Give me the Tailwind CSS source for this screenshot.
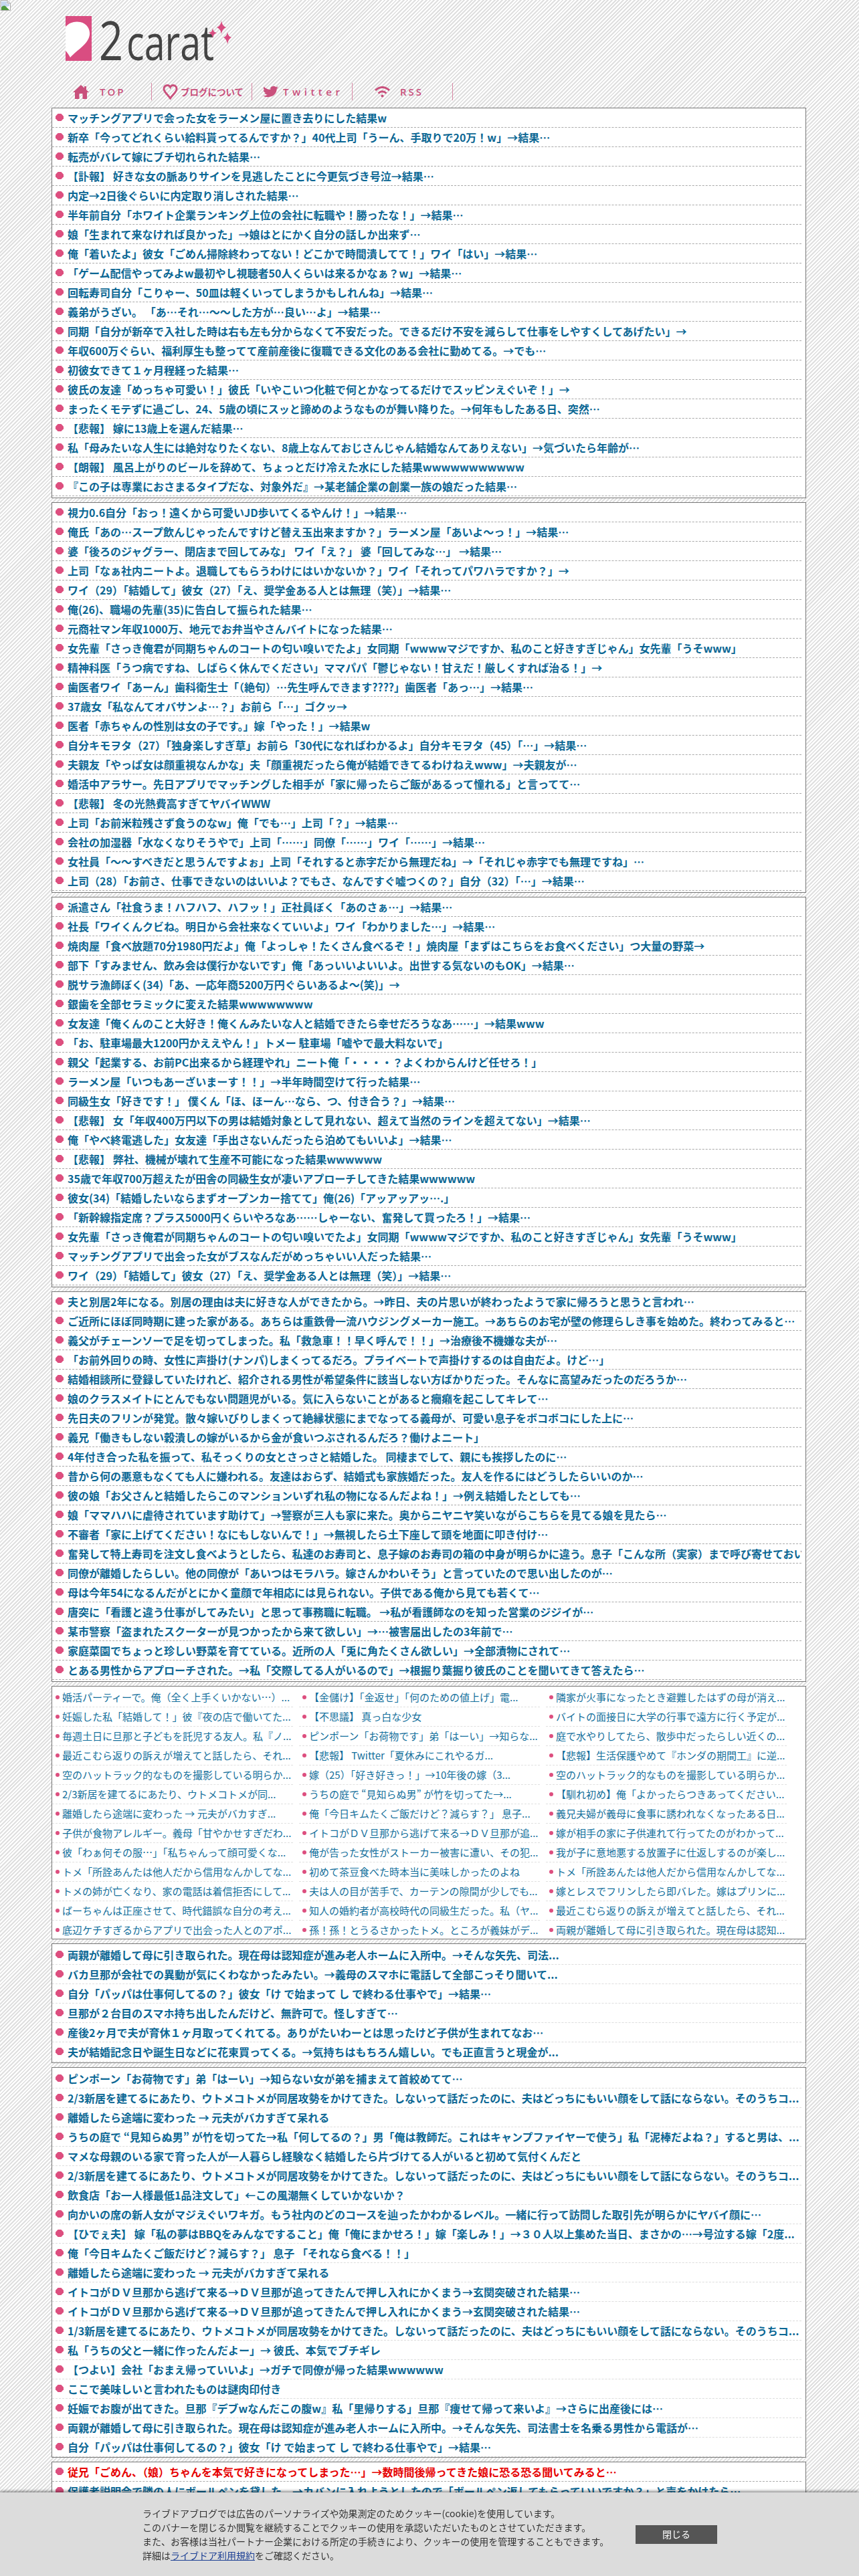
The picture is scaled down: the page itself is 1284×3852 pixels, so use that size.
<!DOCTYPE html>
<html lang="ja">
<head>
<meta charset="utf-8">
<title>2carat</title>
<script src="https://cdn.jsdelivr.net/npm/@tailwindcss/browser@4"></script>
</head>
<body class="font-['Noto_Sans_CJK_JP',sans-serif]">
<div class="h-[3852px] overflow-hidden bg-[repeating-linear-gradient(135deg,#fff_0,#fff_2px,#e0e0e0_2px,#e0e0e0_4px)]">

    <!-- broken image -->
    <svg class="block h-4 w-4" viewBox="0 0 16 16">
        <path d="M1 0.5H11L15.5 5V15.5H1Z" fill="#fff" stroke="#a9a9a9"/>
        <path d="M11 0.5V5H15.5" fill="#e4e4e4" stroke="#a9a9a9"/>
        <path d="M2 2H10V6H14V9L2 12Z" fill="#c5d7ee"/>
        <path d="M2 15V11C5 8 7 8 9 10L14 15Z" fill="#4f9a3d"/>
    </svg>

    <!-- logo -->
    <div class="pl-[98px] pt-2">
        <svg class="block h-[76px] w-[260px]" viewBox="0 0 260 76">
            <rect x="0" y="0" width="39" height="67" fill="#d94d81"/>
            <path d="M0 16C5 10 14 7 22 9C32 11 37 20 36 28C34 42 18 50 7 62C5 58 3 55 0 52Z" fill="#fff"/>
            <text x="50" y="66" font-size="80" textLength="36" lengthAdjust="spacingAndGlyphs" class="fill-[#444] font-['Open_Sans']">2</text>
            <text x="91" y="66" font-size="74" textLength="131" lengthAdjust="spacingAndGlyphs" class="fill-[#444] font-['Open_Sans']">carat</text>
            <path id="spark" d="M233 7C234 13 236 15 240 17C236 19 234 21 233 27C232 21 230 19 226 17C230 15 232 13 233 7Z" fill="#d94d81"/>
            <path d="M220 18C221 23 222 24 226 25C222 27 221 28 220 33C219 28 218 27 214 25C218 24 219 23 220 18Z" fill="#d94d81"/>
            <path d="M242 24C243 29 245 31 248 32C245 34 243 36 242 42C241 36 239 34 236 32C239 31 241 29 242 24Z" fill="#d94d81"/>
        </svg>
    </div>

    <!-- nav -->
    <nav class="ml-[77px] mt-[24px] flex h-[26px] text-[#c9507c] font-['Open_Sans',sans-serif]">
        <a class="flex w-[150px] items-center border-r border-[#d98aa6] pl-[32px]">
            <svg class="h-[21px] w-[24px] fill-[#c9507c]" viewBox="0 0 24 21"><path d="M12 0L17 4.5V2H20V7.3L24 11H21V21H14.5V13H9.5V21H3V11H0Z"/></svg>
            <span class="ml-[16px] text-[15px] font-semibold tracking-[3px]">TOP</span>
        </a>
        <a class="flex w-[150px] items-center border-r border-[#d98aa6] pl-[16px]">
            <svg class="h-[23px] w-[23px] fill-none stroke-[#c9507c] stroke-[3]" viewBox="0 0 24 24"><path d="M12 22C8 16 2 12 2 7C2 3.5 5 1.5 7.500 1.500C9.500 1.500 11 2.500 12 4.500C13 2.500 14.500 1.500 16.500 1.500C19 1.500 22 3.500 22 7C22 12 16 16 12 22Z"/></svg>
            <span class="ml-[4px] text-[13.5px] font-semibold font-['Noto_Sans_CJK_JP',sans-serif]">ブログについて</span>
        </a>
        <a class="flex w-[150px] items-center border-r border-[#d98aa6] pl-[16px]">
            <svg class="h-[20px] w-[23px] fill-[#c9507c]" viewBox="0 0 24 24" preserveAspectRatio="none"><path d="M23.953 4.57a10 10 0 01-2.825.775 4.958 4.958 0 002.163-2.723c-.951.555-2.005.959-3.127 1.184a4.92 4.92 0 00-8.384 4.482C7.69 8.095 4.067 6.13 1.64 3.162a4.822 4.822 0 00-.666 2.475c0 1.71.87 3.213 2.188 4.096a4.904 4.904 0 01-2.228-.616v.06a4.923 4.923 0 003.946 4.827 4.996 4.996 0 01-2.212.085 4.936 4.936 0 004.604 3.417 9.867 9.867 0 01-6.102 2.105c-.39 0-.779-.023-1.17-.067a13.995 13.995 0 007.557 2.209c9.053 0 13.998-7.496 13.998-13.985 0-.21 0-.42-.015-.63A9.935 9.935 0 0024 4.59z"/></svg>
            <span class="ml-[7px] text-[15px] font-semibold tracking-[5.500px]">Twitter</span>
        </a>
        <a class="flex w-[150px] items-center border-r border-[#d98aa6] pl-[32px]">
            <svg class="h-[17px] w-[25px] fill-none stroke-[#c9507c] stroke-[3]" viewBox="0 0 25 17"><path d="M2 6Q12.500 -3 23 6"/><path d="M6.500 10.500Q12.500 5 18.500 10.500"/><circle cx="12.500" cy="14.500" r="2" class="fill-[#c9507c] stroke-0"/></svg>
            <span class="ml-[14px] text-[15px] font-semibold tracking-[3px]">RSS</span>
        </a>
    </nav>

    <main class="ml-[77px] mt-[11px] w-[1128px]">
        <!-- box 1 -->
        <section class="h-[584px] overflow-hidden border border-[#777] bg-white">
            <ul class="w-[1120px] text-[16px] font-bold text-[#0b6794] *:relative *:h-[29px] *:overflow-hidden *:whitespace-nowrap *:border-b *:border-dashed *:border-[#aaa] *:pl-[23px] *:leading-[28px] *:before:absolute *:before:left-[5px] *:before:top-[8px] *:before:h-[11px] *:before:w-[12px] *:before:bg-[#dd4f7f] *:before:content-[''] *:before:[clip-path:polygon(30%_0,70%_0,100%_35%,100%_65%,70%_100%,30%_100%,0_65%,0_35%)]">
                <li>マッチングアプリで会った女をラーメン屋に置き去りにした結果w</li>
                <li>新卒「今ってどれくらい給料貰ってるんですか？」40代上司「うーん、手取りで20万！w」→結果…</li>
                <li>転売がバレて嫁にブチ切れられた結果…</li>
                <li>【訃報】 好きな女の脈ありサインを見逃したことに今更気づき号泣→結果…</li>
                <li>内定→2日後ぐらいに内定取り消しされた結果…</li>
                <li>半年前自分「ホワイト企業ランキング上位の会社に転職や！勝ったな！」→結果…</li>
                <li>娘「生まれて来なければ良かった」→娘はとにかく自分の話しか出来ず…</li>
                <li>俺「着いたよ」彼女「ごめん掃除終わってない！どこかで時間潰してて！」ワイ「はい」→結果…</li>
                <li>「ゲーム配信やってみよw最初やし視聴者50人くらいは来るかなぁ？w」→結果…</li>
                <li>回転寿司自分「こりゃー、50皿は軽くいってしまうかもしれんね」→結果…</li>
                <li>義弟がうざい。 「あ…それ…～～した方が…良い…よ」→結果…</li>
                <li>同期「自分が新卒で入社した時は右も左も分からなくて不安だった。できるだけ不安を減らして仕事をしやすくしてあげたい」→</li>
                <li>年収600万ぐらい、福利厚生も整ってて産前産後に復職できる文化のある会社に勤めてる。→でも…</li>
                <li>初彼女できて１ヶ月程経った結果…</li>
                <li>彼氏の友達「めっちゃ可愛い！」彼氏「いやこいつ化粧で何とかなってるだけでスッピンえぐいぞ！」→</li>
                <li>まったくモテずに過ごし、24、5歳の頃にスッと諦めのようなものが舞い降りた。→何年もしたある日、突然…</li>
                <li>【悲報】 嫁に13歳上を選んだ結果…</li>
                <li>私「母みたいな人生には絶対なりたくない、8歳上なんておじさんじゃん結婚なんてありえない」→気づいたら年齢が…</li>
                <li>【朗報】 風呂上がりのビールを辞めて、ちょっとだけ冷えた水にした結果wwwwwwwwwww</li>
                <li>『この子は専業におさまるタイプだな、対象外だ』→某老舗企業の創業一族の娘だった結果…</li>
            </ul>
        </section>

        <!-- box 2 -->
        <section class="mt-[6px] h-[584px] overflow-hidden border border-[#777] bg-white">
            <ul class="w-[1120px] text-[16px] font-bold text-[#0b6794] *:relative *:h-[29px] *:overflow-hidden *:whitespace-nowrap *:border-b *:border-dashed *:border-[#aaa] *:pl-[23px] *:leading-[28px] *:before:absolute *:before:left-[5px] *:before:top-[8px] *:before:h-[11px] *:before:w-[12px] *:before:bg-[#dd4f7f] *:before:content-[''] *:before:[clip-path:polygon(30%_0,70%_0,100%_35%,100%_65%,70%_100%,30%_100%,0_65%,0_35%)]">
                <li>視力0.6自分「おっ！遠くから可愛いJD歩いてくるやんけ！」→結果…</li>
                <li>俺氏「あの…スープ飲んじゃったんですけど替え玉出来ますか？」ラーメン屋「あいよ～っ！」→結果…</li>
                <li>婆「後ろのジャグラー、閉店まで回してみな」 ワイ「え？」 婆「回してみな…」 →結果…</li>
                <li>上司「なぁ社内ニートよ。退職してもらうわけにはいかないか？」ワイ「それってパワハラですか？」→</li>
                <li>ワイ（29）「結婚して」彼女（27）「え、奨学金ある人とは無理（笑）」→結果…</li>
                <li>俺(26)、職場の先輩(35)に告白して振られた結果…</li>
                <li>元商社マン年収1000万、地元でお弁当やさんバイトになった結果…</li>
                <li>女先輩「さっき俺君が同期ちゃんのコートの匂い嗅いでたよ」女同期「wwwwマジですか、私のこと好きすぎじゃん」女先輩「うそwww」</li>
                <li>精神科医「うつ病ですね、しばらく休んでください」ママパパ「鬱じゃない！甘えだ！厳しくすれば治る！」→</li>
                <li>歯医者ワイ「あーん」歯科衛生士「（絶句）…先生呼んできます????」歯医者「あっ…」→結果…</li>
                <li>37歳女「私なんてオバサンよ…？」お前ら「…」ゴクッ→</li>
                <li>医者「赤ちゃんの性別は女の子です。」嫁「やった！」→結果w</li>
                <li>自分キモヲタ（27）「独身楽しすぎ草」お前ら「30代になればわかるよ」自分キモヲタ（45）「…」→結果…</li>
                <li>夫親友「やっぱ女は顔重視なんかな」夫「顔重視だったら俺が結婚できてるわけねえwww」→夫親友が…</li>
                <li>婚活中アラサー。先日アプリでマッチングした相手が「家に帰ったらご飯があるって憧れる」と言ってて…</li>
                <li>【悲報】 冬の光熱費高すぎてヤバイWWW</li>
                <li>上司「お前米粒残さず食うのなw」俺「でも…」上司「？」→結果…</li>
                <li>会社の加湿器「水なくなりそうやで」上司「……」同僚「……」ワイ「……」→結果…</li>
                <li>女社員「～～すべきだと思うんですよぉ」上司「それすると赤字だから無理だね」→「それじゃ赤字でも無理ですね」…</li>
                <li>上司（28）「お前さ、仕事できないのはいいよ？でもさ、なんですぐ嘘つくの？」自分（32）「…」→結果…</li>
            </ul>
        </section>

        <!-- box 3 -->
        <section class="mt-[6px] h-[584px] overflow-hidden border border-[#777] bg-white">
            <ul class="w-[1120px] text-[16px] font-bold text-[#0b6794] *:relative *:h-[29px] *:overflow-hidden *:whitespace-nowrap *:border-b *:border-dashed *:border-[#aaa] *:pl-[23px] *:leading-[28px] *:before:absolute *:before:left-[5px] *:before:top-[8px] *:before:h-[11px] *:before:w-[12px] *:before:bg-[#dd4f7f] *:before:content-[''] *:before:[clip-path:polygon(30%_0,70%_0,100%_35%,100%_65%,70%_100%,30%_100%,0_65%,0_35%)]">
                <li>派遣さん「社食うま！ハフハフ、ハフッ！」正社員ぼく「あのさぁ…」→結果…</li>
                <li>社長「ワイくんクビね。明日から会社来なくていいよ」ワイ「わかりました…」→結果…</li>
                <li>焼肉屋「食べ放題70分1980円だよ」俺「よっしゃ！たくさん食べるぞ！」焼肉屋「まずはこちらをお食べください」つ大量の野菜→</li>
                <li>部下「すみません、飲み会は僕行かないです」俺「あっいいよいいよ。出世する気ないのもOK」→結果…</li>
                <li>脱サラ漁師ぼく(34)「あ、一応年商5200万円ぐらいあるよ～(笑)」→</li>
                <li>銀歯を全部セラミックに変えた結果wwwwwwww</li>
                <li>女友達「俺くんのこと大好き！俺くんみたいな人と結婚できたら幸せだろうなあ……」→結果www</li>
                <li>「お、駐車場最大1200円かええやん！」トメー 駐車場「嘘やで最大料ないで」</li>
                <li>親父「起業する、お前PC出来るから経理やれ」ニート俺「・・・・？よくわからんけど任せろ！」</li>
                <li>ラーメン屋「いつもあーざいまーす！！」→半年時間空けて行った結果…</li>
                <li>同級生女「好きです！」 僕くん「ほ、ほーん…なら、つ、付き合う？」→結果…</li>
                <li>【悲報】 女「年収400万円以下の男は結婚対象として見れない、超えて当然のラインを超えてない」→結果…</li>
                <li>俺「やべ終電逃した」女友達「手出さないんだったら泊めてもいいよ」→結果…</li>
                <li>【悲報】 弊社、機械が壊れて生産不可能になった結果wwwwww</li>
                <li>35歳で年収700万超えたが田舎の同級生女が凄いアプローチしてきた結果wwwwww</li>
                <li>彼女(34)「結婚したいならまずオープンカー捨てて」俺(26)「アッアッアッ….」</li>
                <li>「新幹線指定席？プラス5000円くらいやろなあ……しゃーない、奮発して買ったろ！」→結果…</li>
                <li>女先輩「さっき俺君が同期ちゃんのコートの匂い嗅いでたよ」女同期「wwwwマジですか、私のこと好きすぎじゃん」女先輩「うそwww」</li>
                <li>マッチングアプリで出会った女がブスなんだがめっちゃいい人だった結果…</li>
                <li>ワイ（29）「結婚して」彼女（27）「え、奨学金ある人とは無理（笑）」→結果…</li>
            </ul>
        </section>

        <!-- box 4 -->
        <section class="mt-[6px] h-[584px] overflow-hidden border border-[#777] bg-white">
            <ul class="w-[1120px] text-[16px] font-bold text-[#0b6794] *:relative *:h-[29px] *:overflow-hidden *:whitespace-nowrap *:border-b *:border-dashed *:border-[#aaa] *:pl-[23px] *:leading-[28px] *:before:absolute *:before:left-[5px] *:before:top-[8px] *:before:h-[11px] *:before:w-[12px] *:before:bg-[#dd4f7f] *:before:content-[''] *:before:[clip-path:polygon(30%_0,70%_0,100%_35%,100%_65%,70%_100%,30%_100%,0_65%,0_35%)]">
                <li>夫と別居2年になる。別居の理由は夫に好きな人ができたから。→昨日、夫の片思いが終わったようで家に帰ろうと思うと言われ…</li>
                <li>ご近所にほぼ同時期に建った家がある。あちらは重鉄骨一流ハウジングメーカー施工。→あちらのお宅が壁の修理らしき事を始めた。終わってみると…</li>
                <li>義父がチェーンソーで足を切ってしまった。私「救急車！！早く呼んで！！」→治療後不機嫌な夫が…</li>
                <li>「お前外回りの時、女性に声掛け(ナンパ)しまくってるだろ。プライベートで声掛けするのは自由だよ。けど…」</li>
                <li>結婚相談所に登録していたけれど、紹介される男性が希望条件に該当しない方ばかりだった。そんなに高望みだったのだろうか…</li>
                <li>娘のクラスメイトにとんでもない問題児がいる。気に入らないことがあると癇癪を起こしてキレて…</li>
                <li>先日夫のフリンが発覚。散々嫁いびりしまくって絶縁状態にまでなってる義母が、可愛い息子をボコボコにした上に…</li>
                <li>義兄「働きもしない穀潰しの嫁がいるから金が食いつぶされるんだろ？働けよニート」</li>
                <li>4年付き合った私を振って、私そっくりの女とさっさと結婚した。 同棲までして、親にも挨拶したのに…</li>
                <li>昔から何の悪意もなくても人に嫌われる。友達はおらず、結婚式も家族婚だった。友人を作るにはどうしたらいいのか…</li>
                <li>彼の娘「お父さんと結婚したらこのマンションいずれ私の物になるんだよね！」→例え結婚したとしても…</li>
                <li>娘「ママハハに虐待されています助けて」→警察が三人も家に来た。奥からニヤニヤ笑いながらこちらを見てる娘を見たら…</li>
                <li>不審者「家に上げてください！なにもしないんで！」→無視したら土下座して頭を地面に叩き付け…</li>
                <li>奮発して特上寿司を注文し食べようとしたら、私達のお寿司と、息子嫁のお寿司の箱の中身が明らかに違う。息子「こんな所（実家）まで呼び寄せておいて</li>
                <li>同僚が離婚したらしい。他の同僚が「あいつはモラハラ。嫁さんかわいそう」と言っていたので思い出したのが…</li>
                <li>母は今年54になるんだがとにかく童顔で年相応には見られない。子供である俺から見ても若くて…</li>
                <li>唐突に「看護と違う仕事がしてみたい」と思って事務職に転職。 →私が看護師なのを知った営業のジジイが…</li>
                <li>某市警察「盗まれたスクーターが見つかったから来て欲しい」→…被害届出したの3年前で…</li>
                <li>家庭菜園でちょっと珍しい野菜を育てている。近所の人「兎に角たくさん欲しい」→全部漬物にされて…</li>
                <li>とある男性からアプローチされた。→私「交際してる人がいるので」→根掘り葉掘り彼氏のことを聞いてきて答えたら…</li>
            </ul>
        </section>

        <!-- box 5: three columns -->
        <section class="mt-[6px] h-[379px] overflow-hidden border border-[#777] bg-white pt-[2px]">
            <ul class="grid grid-cols-[360px_360px_360px] gap-x-[9px] text-[15px] text-[#14709c] *:relative *:h-[29px] *:overflow-hidden *:whitespace-nowrap *:border-b *:border-dashed *:border-[#e0e0e0] *:pl-[15px] *:leading-[28px] *:before:absolute *:before:left-[5px] *:before:top-[11px] *:before:h-[6px] *:before:w-[6px] *:before:rounded-full *:before:bg-[#dd4f7f] *:before:content-['']">
                <li>婚活パーティーで。俺（全く上手くいかない…）...</li>
                <li>【金儲け】「金返せ」「何のための値上げ」電...</li>
                <li>隣家が火事になったとき避難したはずの母が消え...</li>
                <li>妊娠した私「結婚して！」彼『夜の店で働いてた...</li>
                <li>【不思議】 真っ白な少女</li>
                <li>バイトの面接日に大学の行事で遠方に行く予定が...</li>
                <li>毎週土日に旦那と子どもを託児する友人。私『ノ...</li>
                <li>ピンポーン「お荷物です」弟「はーい」→知らな...</li>
                <li>庭で水やりしてたら、散歩中だったらしい近くの...</li>
                <li>最近こむら返りの訴えが増えてと話したら、それ...</li>
                <li>【悲報】 Twitter「夏休みにこれやるガ...</li>
                <li>【悲報】生活保護やめて『ホンダの期間工』に逆...</li>
                <li>空のハットラック的なものを撮影している明らか...</li>
                <li>嫁（25）「好き好きっ！」→10年後の嫁（3...</li>
                <li>空のハットラック的なものを撮影している明らか...</li>
                <li>2/3新居を建てるにあたり、ウトメコトメが同...</li>
                <li>うちの庭で “見知らぬ男” が竹を切ってた→...</li>
                <li>【馴れ初め】俺「よかったらつきあってください...</li>
                <li>離婚したら途端に変わった → 元夫がバカすぎ...</li>
                <li>俺「今日キムたくご飯だけど？減らす？」 息子...</li>
                <li>義兄夫婦が義母に食事に誘われなくなったある日...</li>
                <li>子供が食物アレルギー。義母「甘やかせすぎだわ...</li>
                <li>イトコがＤＶ旦那から逃げて来る→ＤＶ旦那が追...</li>
                <li>嫁が相手の家に子供連れて行ってたのがわかって...</li>
                <li>彼「わぁ何その服…」「私ちゃんって顔可愛くな...</li>
                <li>俺が告った女性がストーカー被害に遭い、その犯...</li>
                <li>我が子に意地悪する放置子に仕返しするのが楽し...</li>
                <li>トメ「所詮あんたは他人だから信用なんかしてな...</li>
                <li>初めて茶豆食べた時本当に美味しかったのよね</li>
                <li>トメ「所詮あんたは他人だから信用なんかしてな...</li>
                <li>トメの姉が亡くなり、家の電話は着信拒否にして...</li>
                <li>夫は人の目が苦手で、カーテンの隙間が少しでも...</li>
                <li>嫁とレスでフリンしたら即バレた。嫁はプリンに...</li>
                <li>ばーちゃんは正座させて、時代錯誤な自分の考え...</li>
                <li>知人の婚約者が高校時代の同級生だった。私（ヤ...</li>
                <li>最近こむら返りの訴えが増えてと話したら、それ...</li>
                <li>底辺ケチすぎるからアプリで出会った人とのアポ...</li>
                <li>孫！孫！とうるさかったトメ。ところが義妹がデ...</li>
                <li>両親が離婚して母に引き取られた。現在母は認知...</li>
            </ul>
        </section>

        <!-- box 6 -->
        <section class="mt-[6px] h-[179px] overflow-hidden border border-[#777] bg-white pt-[2px]">
            <ul class="w-[1120px] text-[16px] font-bold text-[#0b6794] *:relative *:h-[29px] *:overflow-hidden *:whitespace-nowrap *:border-b *:border-dashed *:border-[#ddd] *:pl-[23px] *:leading-[28px] *:before:absolute *:before:left-[5px] *:before:top-[8px] *:before:h-[11px] *:before:w-[12px] *:before:bg-[#dd4f7f] *:before:content-[''] *:before:[clip-path:polygon(30%_0,70%_0,100%_35%,100%_65%,70%_100%,30%_100%,0_65%,0_35%)]">
                <li>両親が離婚して母に引き取られた。現在母は認知症が進み老人ホームに入所中。→そんな矢先、司法...</li>
                <li>バカ旦那が会社での異動が気にくわなかったみたい。→義母のスマホに電話して全部こっそり聞いて...</li>
                <li>自分「パッパは仕事何してるの？」彼女「け で始まって し で終わる仕事やで」→結果…</li>
                <li>旦那が２台目のスマホ持ち出したんだけど、無許可で。怪しすぎて…</li>
                <li>産後2ヶ月で夫が育休１ヶ月取ってくれてる。ありがたいわーとは思ったけど子供が生まれてなお…</li>
                <li>夫が結婚記念日や誕生日などに花束買ってくる。→気持ちはもちろん嬉しい。でも正直言うと現金が...</li>
            </ul>
        </section>

        <!-- box 7 -->
        <section class="mt-[6px] h-[584px] overflow-hidden border border-[#777] bg-white pt-[2px]">
            <ul class="w-[1120px] text-[16px] font-bold text-[#0b6794] *:relative *:h-[29px] *:overflow-hidden *:whitespace-nowrap *:border-b *:border-dashed *:border-[#ddd] *:pl-[23px] *:leading-[28px] *:before:absolute *:before:left-[5px] *:before:top-[8px] *:before:h-[11px] *:before:w-[12px] *:before:bg-[#dd4f7f] *:before:content-[''] *:before:[clip-path:polygon(30%_0,70%_0,100%_35%,100%_65%,70%_100%,30%_100%,0_65%,0_35%)]">
                <li>ピンポーン「お荷物です」弟「はーい」→知らない女が弟を捕まえて首絞めてて…</li>
                <li>2/3新居を建てるにあたり、ウトメコトメが同居攻勢をかけてきた。しないって話だったのに、夫はどっちにもいい顔をして話にならない。そのうちコ...</li>
                <li>離婚したら途端に変わった → 元夫がバカすぎて呆れる</li>
                <li>うちの庭で “見知らぬ男” が竹を切ってた→私「何してるの？」男「俺は教師だ。これはキャンプファイヤーで使う」私「泥棒だよね？」すると男は、...</li>
                <li>マメな母親のいる家で育った人が一人暮らし経験なく結婚したら片づけてる人がいると初めて気付くんだと</li>
                <li>2/3新居を建てるにあたり、ウトメコトメが同居攻勢をかけてきた。しないって話だったのに、夫はどっちにもいい顔をして話にならない。そのうちコ...</li>
                <li>飲食店「お一人様最低1品注文して」←この風潮無くしていかないか？</li>
                <li>向かいの席の新人女がマジえぐいワキガ。もう社内のどのコースを辿ったかわかるレベル。一緒に行って訪問した取引先が明らかにヤバイ顔に…</li>
                <li>【ひでぇ夫】 嫁「私の夢はBBQをみんなですること」俺「俺にまかせろ！」嫁「楽しみ！」→３０人以上集めた当日、まさかの…→号泣する嫁「2度...</li>
                <li>俺「今日キムたくご飯だけど？減らす？」 息子 「それなら食べる！！」</li>
                <li>離婚したら途端に変わった → 元夫がバカすぎて呆れる</li>
                <li>イトコがＤＶ旦那から逃げて来る→ＤＶ旦那が追ってきたんで押し入れにかくまう→玄関突破された結果…</li>
                <li>イトコがＤＶ旦那から逃げて来る→ＤＶ旦那が追ってきたんで押し入れにかくまう→玄関突破された結果…</li>
                <li>1/3新居を建てるにあたり、ウトメコトメが同居攻勢をかけてきた。しないって話だったのに、夫はどっちにもいい顔をして話にならない。そのうちコ...</li>
                <li>私「うちの父と一緒に作ったんだよー」→ 彼氏、本気でブチギレ</li>
                <li>【つよい】会社「おまえ帰っていいよ」→ガチで同僚が帰った結果wwwwww</li>
                <li>ここで美味しいと言われたものは謎肉印付き</li>
                <li>妊娠でお腹が出てきた。旦那『デブwなんだこの腹w』私「里帰りする」旦那『痩せて帰って来いよ』→さらに出産後には…</li>
                <li>両親が離婚して母に引き取られた。現在母は認知症が進み老人ホームに入所中。→そんな矢先、司法書士を名乗る男性から電話が…</li>
                <li>自分「パッパは仕事何してるの？」彼女「け で始まって し で終わる仕事やで」→結果…</li>
            </ul>
        </section>

        <!-- box 8, runs under the cookie banner -->
        <section class="mt-[6px] border border-[#777] bg-white">
            <ul class="w-[1120px] text-[16px] font-bold text-[#0b6794] *:relative *:h-[29px] *:overflow-hidden *:whitespace-nowrap *:border-b *:border-dashed *:border-[#aaa] *:pl-[23px] *:leading-[28px] *:before:absolute *:before:left-[5px] *:before:top-[8px] *:before:h-[11px] *:before:w-[12px] *:before:bg-[#dd4f7f] *:before:content-[''] *:before:[clip-path:polygon(30%_0,70%_0,100%_35%,100%_65%,70%_100%,30%_100%,0_65%,0_35%)]">
                <li class="text-[#e60000]">従兄「ごめん、（娘）ちゃんを本気で好きになってしまった…」→数時間後帰ってきた娘に恐る恐る聞いてみると…</li>
                <li>保護者説明会で隣の人にボールペンを貸した。→カバンに入れようとしたので「ボールペン返してもらっていいですか？」と声をかけたら…</li>
            </ul>
        </section>
    </main>

    <!-- cookie banner -->
    <div class="fixed bottom-0 left-0 flex h-[125px] w-full items-center bg-[#dcdcdc] pl-[213px] shadow-[0_-2px_4px_rgba(0,0,0,0.45)]">
        <p class="w-[737px] text-[14px] leading-[21px] text-[#333]">
            ライブドアブログでは広告のパーソナライズや効果測定のためクッキー(cookie)を使用しています。<br>
            このバナーを閉じるか閲覧を継続することでクッキーの使用を承認いただいたものとさせていただきます。<br>
            また、お客様は当社パートナー企業における所定の手続きにより、クッキーの使用を管理することもできます。<br>
            詳細は<a class="text-[#1c3f94] underline">ライブドア利用規約</a>をご確認ください。
        </p>
        <button class="h-[28px] w-[122px] bg-[#555] text-[14px] text-white">閉じる</button>
    </div>
</div>
</body>
</html>
